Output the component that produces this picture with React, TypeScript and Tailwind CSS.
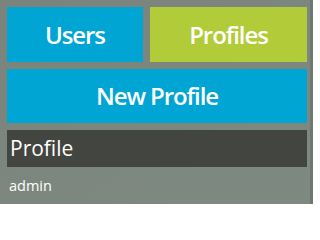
import React from "react";

export default function App() {
  return (
    <div
      className="w-[313px] h-[204px] overflow-hidden bg-gradient-to-br from-[#7a847c] to-[#7e8981] border-r-[3px] border-r-[#6f7870] p-[7px] pr-[3px] flex flex-col gap-[7px]"
      style={{ fontFamily: '"Open Sans", "Noto Sans", sans-serif' }}
    >
      <div className="flex gap-[7px] h-[55px]">
        <div className="w-[136px] bg-[#00a5d3] flex items-center justify-center text-white font-semibold text-[24px] tracking-[-1.1px]">
          Users
        </div>
        <div className="flex-1 bg-[#b2cb38] flex items-center justify-center text-white font-semibold text-[24px] tracking-[-1.1px]">
          Profiles
        </div>
      </div>
      <div className="h-[54px] bg-[#00a5d3] flex items-center justify-center text-white font-semibold text-[24px] tracking-[-1.1px]">
        New Profile
      </div>
      <div className="h-[37px] bg-[#434541] flex items-center px-[3px] text-white text-[21px]">
        Profile
      </div>
      <div className="px-[2px] text-white text-[14.5px] leading-none mt-[5px]">admin</div>
    </div>
  );
}
